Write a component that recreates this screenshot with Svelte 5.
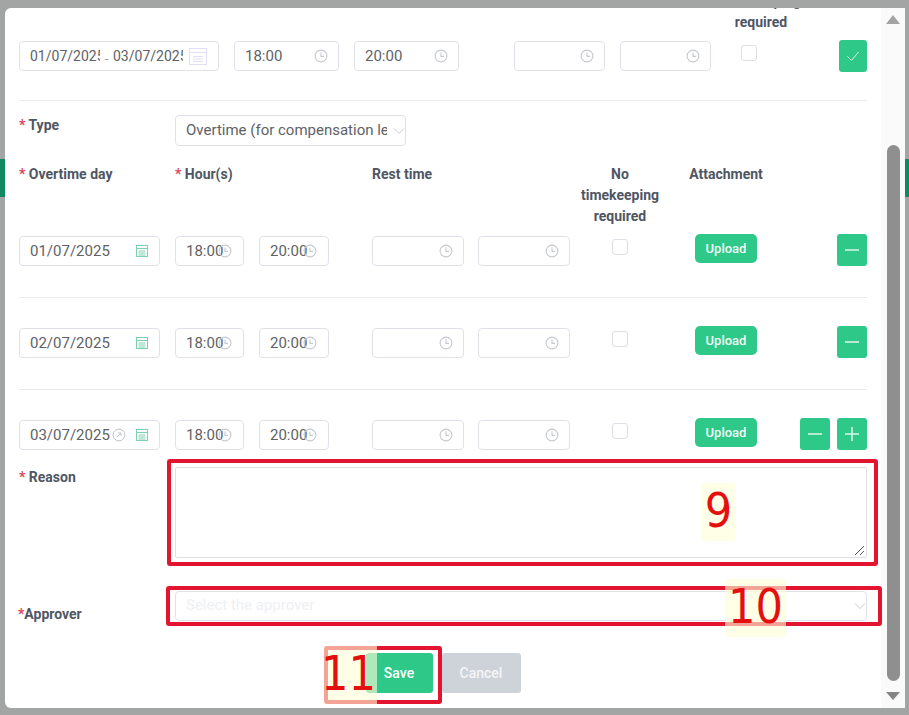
<script lang="ts">
	const days = ['01/07/2025', '02/07/2025', '03/07/2025'];
</script>

{#snippet clock()}
	<svg class="clock" viewBox="0 0 14 14" width="14" height="14">
		<circle cx="7" cy="7" r="5.9" />
		<path d="M7 3.6V7.4H10" />
	</svg>
{/snippet}

{#snippet calendar()}
	<svg class="cal" viewBox="0 0 14 14" width="14" height="14">
		<rect x="1.5" y="1.5" width="11" height="11" />
		<path d="M1.5 4.5H12.5M3.5 7H10.5M3.5 9H10.5M3.5 11H10.5" />
	</svg>
{/snippet}

{#snippet chevron()}
	<svg class="chev" viewBox="0 0 12 8" width="12" height="8">
		<path d="M1 1.5L6 6.5L11 1.5" />
	</svg>
{/snippet}

<div class="page">
	<div class="behind left"></div>
	<div class="behind right"></div>

	<div class="modal">
		<div class="scroll">
			<div class="content">
				<div class="grid top head">
					<span></span><span></span><span></span><span></span><span></span>
					<div class="label center">No<br />timekeeping<br />required</div>
				</div>
				<div class="grid top first">
					<div class="input range">
						<span class="clip">01/07/2025</span>
						<span class="sep">_</span>
						<span class="clip">03/07/2025</span>
						<svg class="cal big" viewBox="0 0 18 18" width="18" height="18">
							<rect x="0.5" y="1.5" width="17" height="16" />
							<path d="M0.5 5.5H17.5M4 9.5H14M4 12H14M4 14.5H14" />
						</svg>
					</div>
					<div class="input text">18:00{@render clock()}</div>
					<div class="input text">20:00{@render clock()}</div>
					<div class="input">{@render clock()}</div>
					<div class="input">{@render clock()}</div>
					<div class="cell-center"><span class="check"></span></div>
					<div class="actions">
						<button class="square tall" aria-label="Confirm">
							<svg viewBox="0 0 14 14" width="14" height="14"><path d="M1.5 7.5L5.5 11.5L12.5 3" /></svg>
						</button>
					</div>
				</div>
				<div class="line"></div>

				<div class="form type">
					<div class="label"><i>*</i> Type</div>
					<div class="input select short">
						<span class="clip-type">Overtime (for compensation leave)</span>
						{@render chevron()}
					</div>
				</div>

				<div class="grid days head2">
					<div class="label"><i>*</i> Overtime day</div>
					<div class="label wide"><i>*</i> Hour(s)</div>
					<div class="label wide">Rest time</div>
					<div class="label center">No<br />timekeeping<br />required</div>
					<div class="label center">Attachment</div>
				</div>

				{#each days as day, i}
					<div class="grid days">
						<div class="input text date">
							{day}
							{#if i === 2}
								<svg class="clear" viewBox="0 0 14 14" width="14" height="14">
									<circle cx="7" cy="7" r="5.9" />
									<path d="M5 9L9 5M6 5H9V8" />
								</svg>
							{/if}
							{@render calendar()}
						</div>
						<div class="input text tight">18:00{@render clock()}</div>
						<div class="input text tight">20:00{@render clock()}</div>
						<div class="input">{@render clock()}</div>
						<div class="input">{@render clock()}</div>
						<div class="cell-center"><span class="check"></span></div>
						<div class="cell-center"><button class="upload">Upload</button></div>
						<div class="actions">
							<button class="square" aria-label="Remove">
								<svg viewBox="0 0 16 16" width="16" height="16"><path d="M1 8H15" /></svg>
							</button>
							{#if i === 2}
								<button class="square" aria-label="Add">
									<svg viewBox="0 0 16 16" width="16" height="16"><path d="M1 8H15M8 1V15" /></svg>
								</button>
							{/if}
						</div>
					</div>
					{#if i < 2}
						<div class="line day-line"></div>
					{/if}
				{/each}

				<div class="form reason">
					<div class="label"><i>*</i> Reason</div>
					<div class="textarea">
						<svg viewBox="0 0 12 12" width="12" height="12">
							<path d="M1 10L10 1M6 10L10 6" />
						</svg>
					</div>
				</div>

				<div class="form approver">
					<div class="label"><i>*</i>Approver</div>
					<div class="input select">
						<span class="placeholder">Select the approver</span>
						{@render chevron()}
					</div>
				</div>

				<div class="footer">
					<button class="btn save">Save</button>
					<button class="btn cancel">Cancel</button>
				</div>
			</div>
		</div>

		<div class="bar">
			<span class="arrow up"></span>
			<div class="track"><div class="thumb"></div></div>
			<span class="arrow down"></span>
		</div>
	</div>

	<!-- annotation marks drawn over the screenshot -->
	<div class="mark box-9"></div>
	<div class="mark box-10"></div>
	<div class="mark box-11"></div>
	<div class="tag tag-9">9</div>
	<div class="tag tag-10">10</div>
	<div class="tag tag-11">11</div>
</div>

<style>
	:global(body) {
		margin: 0;
		background: #a3a5a5;
	}

	.page {
		position: relative;
		width: 909px;
		height: 715px;
		box-sizing: border-box;
		padding: 8px 4px 7px 5px;
		overflow: hidden;
		font-family: Roboto, 'Liberation Sans', sans-serif;
	}

	.behind {
		position: absolute;
		top: 159px;
		height: 38px;
		background: #0f8a60;
	}

	.behind.left {
		left: 0;
		width: 5px;
	}

	.behind.right {
		right: 0;
		width: 4px;
	}

	.modal {
		position: relative;
		display: flex;
		height: 700px;
		background: #fff;
		border-radius: 6px 0 0 6px;
		overflow: hidden;
	}

	.scroll {
		flex: 1;
		overflow: hidden;
	}

	.content {
		width: 848px;
		margin: -38px 0 0 14px;
	}

	.grid {
		display: grid;
		align-items: start;
	}

	.grid.top {
		grid-template-columns: 215px 120px 160px 106px 91px 76px 80px;
	}

	.grid.days {
		grid-template-columns: 156px 84px 113px 106px 92px 100px 112px 85px;
	}

	.grid.top.first {
		margin-top: 8px;
	}

	.grid.top .input.range {
		width: 200px;
	}

	.grid.top .input.text {
		width: 105px;
	}

	.grid.top .input {
		width: 91px;
	}

	.grid.days .input.date {
		width: 141px;
	}

	.grid.days .input.tight {
		width: 69px;
	}

	.grid.days .input.tight + .input.tight {
		width: 70px;
	}

	.grid.days .input {
		width: 92px;
	}

	.head {
		height: 63px;
	}

	.head .label.center {
		grid-column: 6;
		margin-left: 12px;
		margin-right: -12px;
	}

	.head2 {
		margin-top: 18px;
		margin-bottom: 9px;
	}

	.head2 .wide:nth-child(2) {
		grid-column: 2 / span 2;
	}

	.head2 .wide:nth-child(3) {
		grid-column: 4 / span 2;
	}

	.label {
		font-size: 14px;
		font-weight: 700;
		line-height: 21px;
		color: #4f5663;
		white-space: nowrap;
	}

	.label i {
		font-style: normal;
		color: #e0455a;
	}

	.label.center {
		text-align: center;
	}

	.input {
		position: relative;
		display: flex;
		align-items: center;
		justify-content: flex-end;
		box-sizing: border-box;
		height: 30px;
		padding: 0 10px;
		border: 1px solid #dfe2e8;
		border-radius: 4px;
		background: #fff;
		color: #606266;
		font-size: 15px;
	}

	.input.text {
		justify-content: space-between;
	}

	.input.tight {
		padding-right: 11px;
	}

	.input.tight .clock {
		margin-left: -5px;
	}

	.input.range {
		justify-content: flex-start;
		font-size: 14px;
		padding-right: 11px;
	}

	.clip {
		display: block;
		width: 70px;
		overflow: hidden;
		white-space: nowrap;
	}

	.sep {
		width: 13px;
		font-size: 8px;
		text-align: center;
	}

	.input.range .big {
		margin-left: auto;
	}

	.clear {
		flex: none;
		margin-left: 2px;
		fill: none;
		stroke: #c0c4cc;
	}

	.input.date {
		justify-content: flex-start;
		gap: 0;
	}

	.input.date .cal {
		margin-left: auto;
	}

	.clock {
		flex: none;
		fill: none;
		stroke: #c6c9cf;
		stroke-width: 1.1;
	}

	.cal {
		flex: none;
		fill: none;
		stroke: #7dd0ae;
		stroke-width: 1;
	}

	.cal.big {
		stroke: #e2dff4;
	}

	.chev {
		flex: none;
		fill: none;
		stroke: #c6c9cf;
		stroke-width: 1;
	}

	.select {
		flex: 1;
		justify-content: space-between;
		padding-right: 0.5px;
		padding-left: 10px;
	}

	.short {
		flex: none;
		width: 231px;
		height: 31px;
		padding-bottom: 2px;
	}

	.short .chev {
		margin-top: 2px;
	}

	.clip-type {
		display: block;
		width: 201px;
		overflow: hidden;
		white-space: nowrap;
	}

	.placeholder {
		margin-bottom: 2px;
		font-size: 15px;
		color: #eef0f3;
	}

	.cell-center {
		display: flex;
		justify-content: center;
	}

	.check {
		display: block;
		box-sizing: border-box;
		width: 16px;
		height: 16px;
		margin-top: 3px;
		border: 1px solid #dcdfe6;
		border-radius: 3px;
	}

	.grid.top .check {
		margin-top: 4px;
	}

	.actions {
		display: flex;
		justify-content: flex-end;
		gap: 7px;
		margin-top: -2px;
	}

	.grid.top .actions {
		margin-top: -1px;
		margin-bottom: -1px;
	}

	button {
		font-family: inherit;
		border: 0;
		padding: 0;
		margin: 0;
	}

	.square {
		display: flex;
		align-items: center;
		justify-content: center;
		width: 30px;
		height: 32px;
		border-radius: 3px;
		background: #2ec988;
	}

	.square.tall {
		width: 28px;
	}

	.square svg {
		fill: none;
		stroke: #d9f6e8;
		stroke-width: 1.6;
	}

	.square.tall svg {
		stroke-width: 1;
	}

	.upload {
		width: 62px;
		height: 29px;
		margin-top: -2px;
		border-radius: 5px;
		background: #2ec988;
		color: #f1fbf6;
		font-size: 13px;
		font-weight: 500;
	}

	.line {
		height: 1px;
		margin-top: 29px;
		background: #e9ebef;
	}

	.day-line {
		margin-top: 31px;
		margin-bottom: 30px;
	}

	.form {
		display: grid;
		grid-template-columns: 156px 1fr;
		align-items: start;
	}

	.type {
		margin-top: 14px;
	}

	.reason {
		margin-top: 17px;
	}

	.textarea {
		position: relative;
		display: flex;
		align-items: flex-end;
		justify-content: flex-end;
		box-sizing: border-box;
		height: 91px;
		border: 1px solid #dcdfe3;
		border-radius: 2px;
	}

	.textarea svg {
		fill: none;
		stroke: #555;
		stroke-width: 1;
	}

	.approver {
		margin-top: 33px;
	}

	.approver .label {
		margin-top: 13px;
		margin-left: -1px;
	}

	.footer {
		display: flex;
		justify-content: center;
		gap: 9px;
		margin-top: 28px;
	}

	.btn {
		height: 40px;
		border-radius: 3px;
		color: #fff;
		font-size: 14px;
		font-weight: 500;
	}

	.save {
		width: 67px;
		background: #2ec988;
	}

	.cancel {
		width: 79px;
		background: #ced2d9;
		color: #f4f5f7;
	}

	.bar {
		display: flex;
		flex-direction: column;
		align-items: center;
		width: 24px;
		background: #fafafa;
	}

	.arrow {
		flex: none;
		width: 0;
		height: 0;
		border-left: 7.5px solid transparent;
		border-right: 7.5px solid transparent;
	}

	.arrow.up {
		margin-top: 7px;
		border-bottom: 9px solid #a3a3a3;
	}

	.arrow.down {
		margin-bottom: 8px;
		border-top: 8px solid #858585;
	}

	.track {
		flex: 1;
		width: 13px;
		padding-top: 121px;
		padding-bottom: 11px;
		box-sizing: border-box;
	}

	.thumb {
		height: 100%;
		border-radius: 7px;
		background: #8f8f8f;
	}

	.mark {
		position: absolute;
		box-sizing: border-box;
		border: 4px solid #e3142f;
		border-radius: 3px;
	}

	.box-9 {
		left: 167px;
		top: 459px;
		width: 711px;
		height: 107px;
	}

	.box-10 {
		left: 166px;
		top: 586px;
		width: 716px;
		height: 40px;
	}

	.box-11 {
		left: 324px;
		top: 646px;
		width: 118px;
		height: 58px;
	}

	.tag {
		position: absolute;
		height: 58px;
		background: rgba(255, 253, 215, 0.62);
		color: #e40f0f;
		font-family: 'DejaVu Sans Condensed', 'DejaVu Sans', sans-serif;
		font-stretch: condensed;
		font-size: 48px;
		line-height: 55px;
		text-align: center;
	}

	.tag-9 {
		left: 702px;
		top: 483px;
		width: 33px;
	}

	.tag-10 {
		left: 725px;
		top: 579px;
		width: 61px;
	}

	.tag-11 {
		left: 324px;
		top: 646px;
		width: 53px;
		text-align: left;
		text-indent: -3px;
		white-space: nowrap;
	}
</style>
